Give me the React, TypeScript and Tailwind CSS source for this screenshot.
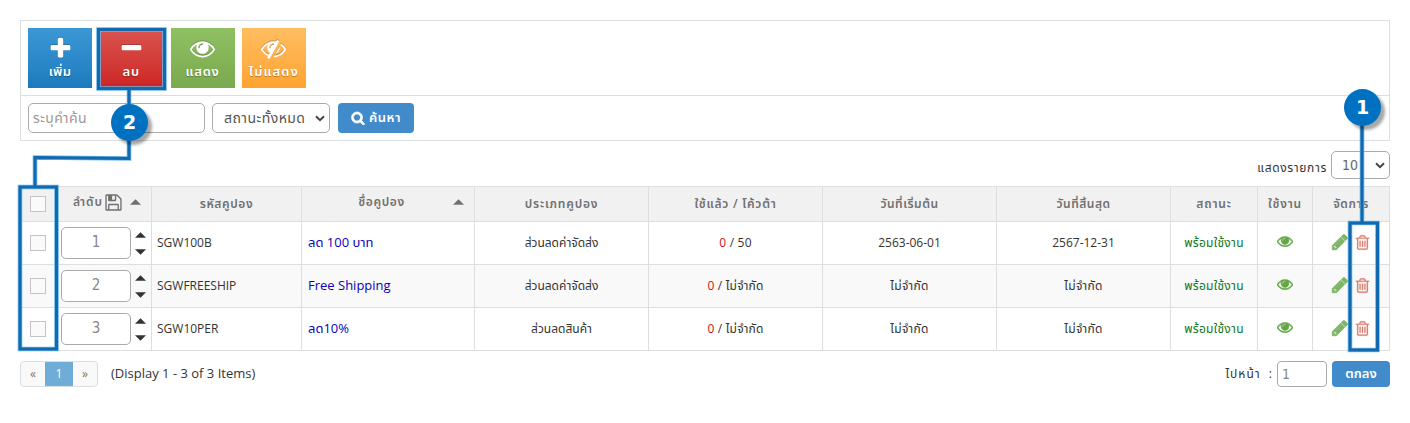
import { FunctionComponent, ReactNode } from "react";

const ICONS = {
  plus: "M1600 736v192q0 40-28 68t-68 28h-416v416q0 40-28 68t-68 28h-192q-40 0-68-28t-28-68v-416h-416q-40 0-68-28t-28-68v-192q0-40 28-68t68-28h416v-416q0-40 28-68t68-28h192q40 0 68 28t28 68v416h416q40 0 68 28t28 68z",
  minus:
    "M1600 736v192q0 40-28 68t-68 28h-1216q-40 0-68-28t-28-68v-192q0-40 28-68t68-28h1216q40 0 68 28t28 68z",
  eye: "M1664 960q-152-236-381-353 61 104 61 225 0 185-131.5 316.5t-316.5 131.5-316.5-131.5-131.5-316.5q0-121 61-225-229 117-381 353 133 205 333.5 326.5t434.5 121.5 434.5-121.5 333.5-326.5zm-720-384q0-20-14-34t-34-14q-125 0-214.5 89.5t-89.5 214.5q0 20 14 34t34 14 34-14 14-34q0-86 61-147t147-61q20 0 34-14t14-34zm848 384q0 34-20 69-140 230-376.5 368.5t-499.5 138.5-499.5-139-376.5-368q-20-35-20-69t20-69q140-229 376.5-368t499.5-139 499.5 139 376.5 368q20 35 20 69z",
  eyeSlash:
    "M555 1335l78-141q-87-63-136-159t-49-203q0-121 61-225-229 117-381 353 167 258 427 375zm389-759q0-20-14-34t-34-14q-125 0-214.5 89.5t-89.5 214.5q0 20 14 34t34 14 34-14 14-34q0-86 61-147t147-61q20 0 34-14t14-34zm363-191q0 7-1 9-106 189-316 567t-315 566l-49 89q-10 16-28 16-12 0-134-70-16-10-16-28 0-12 44-87-143-65-263.5-173t-208.5-245q-20-31-20-69t20-69q153-235 380-371t496-136q89 0 180 17l54-97q10-16 28-16 5 0 18 6t31 15.5 33 18.5 31.5 18.5 19.5 11.5q16 10 16 27zm37 447q0 139-79 253.5t-209 164.5l280-502q8 45 8 84zm448 128q0 35-20 69-39 64-109 145-150 172-347.5 267t-419.5 95l74-132q212-18 392.5-137t301.5-307q-115-179-282-294l63-112q95 64 182.5 153t144.5 184q20 34 20 69z",
  search:
    "M1216 832q0-185-131.5-316.5t-316.5-131.5-316.5 131.5-131.5 316.5 131.5 316.5 316.5 131.5 316.5-131.5 131.5-316.5zm512 832q0 52-38 90t-90 38q-54 0-90-38l-343-342q-179 124-399 124-143 0-273.5-55.5t-225-150-150-225-55.5-273.5 55.5-273.5 150-225 225-150 273.5-55.5 273.5 55.5 225 150 150 225 55.5 273.5q0 220-124 399l343 343q37 37 37 90z",
  save: "M512 1536h768v-384h-768v384zm896 0h128v-896q0-14-10-38.5t-20-34.5l-281-281q-10-10-34-20t-39-10v416q0 40-28 68t-68 28h-576q-40 0-68-28t-28-68v-416h-128v1280h128v-416q0-40 28-68t68-28h832q40 0 68 28t28 68v416zm-384-928v-320q0-13-9.5-22.5t-22.5-9.5h-192q-13 0-22.5 9.5t-9.5 22.5v320q0 13 9.5 22.5t22.5 9.5h192q13 0 22.5-9.5t9.5-22.5zm640 32v928q0 40-28 68t-68 28h-1344q-40 0-68-28t-28-68v-1344q0-40 28-68t68-28h928q40 0 88 20t76 48l280 280q28 28 48 76t20 88z",
  pencil:
    "M491 1536l91-91-235-235-91 91v107h128v128h107zm523-928q0-22-22-22-10 0-17 7l-542 542q-7 7-7 17 0 22 22 22 10 0 17-7l542-542q7-7 7-17zm-54-192l416 416-832 832h-416v-416zm683 96q0 53-37 90l-166 166-416-416 166-165q36-38 90-38 53 0 91 38l235 234q37 39 37 91z",
  trash:
    "M704 736v576q0 14-9 23t-23 9h-64q-14 0-23-9t-9-23v-576q0-14 9-23t23-9h64q14 0 23 9t9 23zm256 0v576q0 14-9 23t-23 9h-64q-14 0-23-9t-9-23v-576q0-14 9-23t23-9h64q14 0 23 9t9 23zm256 0v576q0 14-9 23t-23 9h-64q-14 0-23-9t-9-23v-576q0-14 9-23t23-9h64q14 0 23 9t9 23zm128 724v-948h-896v948q0 22 7 40.5t14.5 27 10.5 8.5h832q3 0 10.5-8.5t14.5-27 7-40.5zm-672-1076h448l-48-117q-7-9-17-11h-317q-10 2-17 11zm928 32v64q0 14-9 23t-23 9h-96v948q0 83-47 143.5t-113 60.5h-832q-66 0-113-58.5t-47-141.5v-952h-96q-14 0-23-9t-9-23v-64q0-14 9-23t23-9h309l70-167q15-37 54-63t79-26h320q40 0 79 26t54 63l70 167h309q14 0 23 9t9 23z",
};

type IconType = { name: keyof typeof ICONS; className?: string };

const Icon: FunctionComponent<IconType> = ({ name, className = "" }) => (
  <svg viewBox="0 0 1792 1792" fill="currentColor" stroke="currentColor" className={`shrink-0 ${className}`}>
    <path d={ICONS[name]} />
  </svg>
);

const Triangle: FunctionComponent<{ className?: string }> = ({ className = "" }) => (
  <svg viewBox="0 0 10 5" className={`w-[11px] h-[6px] shrink-0 ${className}`}>
    <path d="M0 5L5 0L10 5Z" fill="currentColor" />
  </svg>
);

const Chevron: FunctionComponent = () => (
  <svg viewBox="0 0 10 7" className="w-2.5 h-[7px] shrink-0 text-[#444]">
    <path d="M1 1.2L5 5.2L9 1.2" fill="none" stroke="currentColor" strokeWidth="2" />
  </svg>
);

const ToolButton: FunctionComponent<{
  icon: keyof typeof ICONS;
  label: string;
  className: string;
}> = ({ icon, label, className }) => (
  <button
    className={`w-16 h-[60px] flex flex-col items-center text-white font-semibold text-[13px] leading-[18px] [text-shadow:0_1px_1px_rgba(0,0,0,0.3)] ${className}`}
  >
    <span className="h-[34px] pt-1.5 flex items-center justify-center">
      <Icon name={icon} className="w-[25px] h-[25px] drop-shadow-[0_-1px_0_rgba(0,0,0,0.2)]" />
    </span>
    <span className="whitespace-nowrap">{label}</span>
  </button>
);

const Checkbox: FunctionComponent = () => (
  <span className="block w-4 h-4 border border-[#c4c4c4] bg-[#fafafa]" />
);

const COLS =
  "grid grid-cols-[36px_96px_150px_173px_174px_174px_174px_174px_87px_55px_77px]";

const Cell: FunctionComponent<{ className?: string; children?: ReactNode }> = ({
  className = "justify-center",
  children,
}) => (
  <div
    className={`flex items-center border-r border-b border-[#dcdfe1] whitespace-nowrap ${className}`}
  >
    {children}
  </div>
);

const rows = [
  {
    code: "SGW100B",
    name: "ลด 100 บาท",
    kind: "ส่วนลดค่าจัดส่ง",
    quota: "50",
    start: "2563-06-01",
    end: "2567-12-31",
  },
  {
    code: "SGWFREESHIP",
    name: "Free Shipping",
    kind: "ส่วนลดค่าจัดส่ง",
    quota: "ไม่จำกัด",
    start: "ไม่จำกัด",
    end: "ไม่จำกัด",
  },
  {
    code: "SGW10PER",
    name: "ลด10%",
    kind: "ส่วนลดสินค้า",
    quota: "ไม่จำกัด",
    start: "ไม่จำกัด",
    end: "ไม่จำกัด",
  },
];

const CALLOUT_LINES = [
  "M98.5 29.5H164.5V88.5H98.5Z",
  "M129 88V158.5L35 157.5V187",
  "M20 187H56.5V349H20Z",
  "M1362 110V223",
  "M1350 223H1377.5V350H1350Z",
];

const Callouts: FunctionComponent = () => (
  <div className="absolute inset-0 pointer-events-none font-['DejaVu_Sans',sans-serif]">
    <svg className="absolute inset-0 w-[1410px] h-[423px]" fill="none">
      {CALLOUT_LINES.map((d) => (
        <path key={d} d={d} stroke="#6db8ea" strokeWidth="4.6" />
      ))}
      {CALLOUT_LINES.map((d) => (
        <path key={d} d={d} stroke="#1269ad" strokeWidth="3" />
      ))}
    </svg>
    <span className="absolute left-[111px] top-[104px] w-[37px] h-[37px] rounded-full bg-[#0070c0] shadow-[4px_4px_3px_rgba(0,0,0,0.35)] flex items-center justify-center text-white font-bold text-[19px]">
      2
    </span>
    <span className="absolute left-[1344px] top-[89px] w-[37px] h-[37px] rounded-full bg-[#0070c0] shadow-[4px_4px_3px_rgba(0,0,0,0.35)] flex items-center justify-center text-white font-bold text-[19px]">
      1
    </span>
  </div>
);

const App: FunctionComponent = () => {
  return (
    <div className="relative w-[1410px] h-[423px] overflow-hidden bg-white pl-5 pr-5 pt-5 text-[13px] text-[#333] font-['Open_Sans','Noto_Sans_Thai',sans-serif]">
      <div className="w-[1370px] border border-[#dcdfe1]">
        <div className="h-[75px] border-b border-[#dcdfe1] flex items-start gap-[7.3px] pt-[7px] pl-[7px]">
          <ToolButton icon="plus" label="เพิ่ม" className="tracking-[0.3px] bg-linear-to-b from-[#3d97d6] to-[#1b7bbd]" />
          <ToolButton icon="minus" label="ลบ" className="tracking-[1px] bg-linear-to-b from-[#d9534f] to-[#cd2323]" />
          <ToolButton icon="eye" label="แสดง" className="tracking-[0.8px] bg-linear-to-b from-[#8fc162] to-[#7aa94e]" />
          <ToolButton icon="eyeSlash" label="ไม่แสดง" className="tracking-[1.1px] bg-linear-to-b from-[#ffbd60] to-[#ffa42e]" />
        </div>
        <div className="h-11 flex items-start pt-[7px] pl-[7px]">
          <div className="w-[177px] h-[30px] border border-[#aaa] rounded-[5px] px-1 flex items-center text-sm text-[#999] tracking-[0.4px]">
            ระบุคำค้น
          </div>
          <div className="ml-[7px] w-[118px] h-[30px] border border-[#aaa] rounded-[5px] pl-[11px] pr-1 flex items-center justify-between text-sm text-[#555] tracking-[0.45px]">
            <span>สถานะทั้งหมด</span>
            <Chevron />
          </div>
          <button className="ml-2 w-[76px] h-[30px] rounded-[4px] bg-[#428bca] text-white font-semibold flex items-center justify-center gap-1 tracking-[0.5px]">
            <Icon name="search" className="w-3.5 h-3.5 [stroke-width:90]" />
            ค้นหา
          </button>
        </div>
      </div>

      <div className="h-[45px] pt-2.5 flex justify-end items-start gap-1">
        <span className="leading-[33px] text-xs tracking-[0.65px]">แสดงรายการ</span>
        <div className="w-[59px] h-7 border border-[#aaa] rounded-[5px] pl-2.5 pr-1 flex items-center justify-between text-sm text-[#666] font-['DejaVu_Sans_Condensed','DejaVu_Sans',sans-serif]">
          <span>10</span>
          <Chevron />
        </div>
      </div>

      <div className="w-[1370px] border-t border-[#dcdfe1] shadow-[-1px_0_0_#dcdfe1]">
        <div className={`${COLS} h-[35px] bg-[#f1f1f1] text-[#707070] font-semibold text-xs tracking-[0.3px]`}>
          <Cell><Checkbox /></Cell>
          <Cell className="pl-[17px] pb-1">
            <span className="tracking-[0.9px]">ลำดับ</span>
            <Icon name="save" className="ml-px w-[19px] h-[19px]" />
            <Triangle className="ml-[7px]" />
          </Cell>
          <Cell className="justify-center tracking-[0.6px]">รหัสคูปอง</Cell>
          <Cell className="pb-1 tracking-[0.6px]">
            <span className="flex-1 pl-2 text-center">ชื่อคูปอง</span>
            <Triangle className="mr-2.5" />
          </Cell>
          <Cell className="justify-center tracking-[0.8px]">ประเภทคูปอง</Cell>
          <Cell className="justify-center tracking-[0.75px]">ใช้แล้ว / โค้วต้า</Cell>
          <Cell className="justify-center tracking-[0.5px]">วันที่เริ่มต้น</Cell>
          <Cell className="justify-center tracking-[0.5px]">วันที่สิ้นสุด</Cell>
          <Cell className="justify-center tracking-[0.8px]">สถานะ</Cell>
          <Cell className="justify-center tracking-[0.8px]">ใช้งาน</Cell>
          <Cell className="justify-center tracking-[0.6px]">จัดการ</Cell>
        </div>
        {rows.map((row, i) => (
          <div key={row.code} className={`${COLS} h-[43px] text-xs even:bg-white odd:bg-[#f9f9f9]`}>
            <Cell><Checkbox /></Cell>
            <Cell className="pl-[5px]">
              <div className="w-[70px] h-8 border border-[#aaa] rounded-[5px] bg-white flex items-center justify-center text-[15px] text-[#888] font-['DejaVu_Sans_Condensed','DejaVu_Sans',sans-serif]">
                {i + 1}
              </div>
              <div className="ml-1 flex flex-col gap-[11px] text-[#333]">
                <Triangle />
                <Triangle className="rotate-180" />
              </div>
            </Cell>
            <Cell className="pl-[5px]">{row.code}</Cell>
            <Cell className="pl-1.5 text-[13px] text-[#0b00b8]">{row.name}</Cell>
            <Cell>{row.kind}</Cell>
            <Cell className="justify-center whitespace-pre tracking-[0.2px]">
              <span className="text-[#d01010]">0</span> / {row.quota}
            </Cell>
            <Cell className={row.start === "ไม่จำกัด" ? "justify-center tracking-[0.3px]" : "justify-center"}>{row.start}</Cell>
            <Cell className={row.end === "ไม่จำกัด" ? "justify-center tracking-[0.3px]" : "justify-center"}>{row.end}</Cell>
            <Cell className="justify-center text-[#10761a] tracking-[0.3px]">พร้อมใช้งาน</Cell>
            <Cell className="justify-center text-[#62a744]">
              <Icon name="eye" className="w-4 h-4 mb-1 [stroke-width:50]" />
            </Cell>
            <Cell className="pl-[18px] pb-0.5 gap-[5px]">
              <Icon name="pencil" className="w-[18px] h-[18px] text-[#7cb564] [stroke-width:80]" />
              <Icon name="trash" className="w-[17px] h-[17px] text-[#db7f70] [stroke-width:20]" />
            </Cell>
          </div>
        ))}
      </div>

      <div className="mt-2.5 h-[26px] w-[1370px] flex items-center">
        <div className="h-[26px] w-[78px] flex border border-[#dcdfe1] rounded-[4px] overflow-hidden text-xs leading-6 text-center bg-[#f9f9f9] text-[#777]">
          <span className="w-6">«</span>
          <span className="w-7 bg-[#70acd8] text-white">1</span>
          <span className="w-6">»</span>
        </div>
        <span className="ml-[13px] flex-1">(Display 1 - 3 of 3 Items)</span>
        <span className="whitespace-pre text-xs tracking-[1px]">ไปหน้า  :</span>
        <div className="ml-1 w-[50px] h-[26px] border border-[#aaa] rounded-[4px] pl-1 flex items-center text-sm text-[#888] font-['DejaVu_Sans_Condensed','DejaVu_Sans',sans-serif]">
          1
        </div>
        <button className="ml-[5px] w-[58px] h-[26px] rounded-[4px] bg-[#428bca] text-white font-semibold">
          ตกลง
        </button>
      </div>
      <Callouts />
    </div>
  );
};

export default App;
